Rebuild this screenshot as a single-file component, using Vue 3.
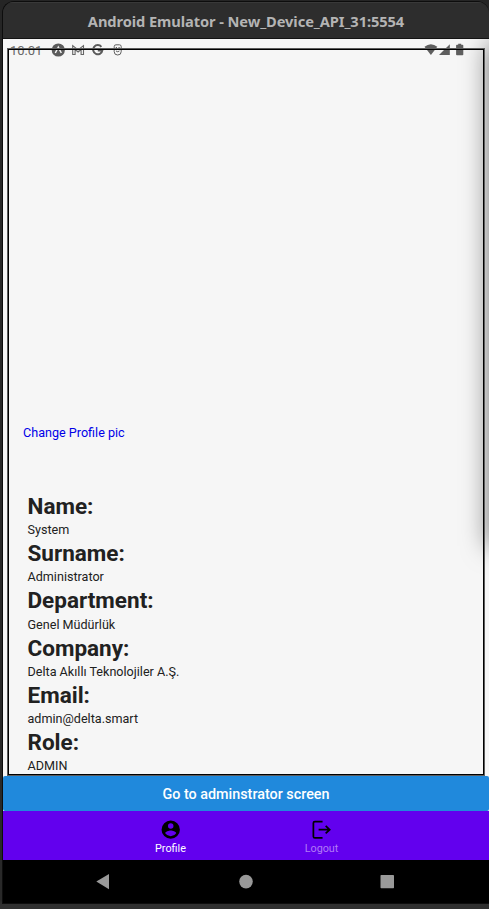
<script setup>
const fields = [
  { label: 'Name:', value: 'System' },
  { label: 'Surname:', value: 'Administrator' },
  { label: 'Department:', value: 'Genel Müdürlük' },
  { label: 'Company:', value: 'Delta Akıllı Teknolojiler A.Ş.' },
  { label: 'Email:', value: 'admin@delta.smart' },
  { label: 'Role:', value: 'ADMIN' },
]
</script>

<template>
  <div class="desktop">
    <div class="window">
      <header class="titlebar"><span class="title">Android Emulator - New_Device_API_31:5554</span></header>
      <main class="screen">
        <div class="drawer-shadow"></div>
        <div class="status">
          <span class="clock">10:01</span>
          <svg class="notifications" width="76" height="16" viewBox="0 0 76 16">
            <circle cx="7.3" cy="8" r="6.6" fill="#5c5c5c" />
            <path d="M4.3 11 7.3 5.2l3 5.8" fill="none" stroke="#f5f5f5" stroke-width="1.5" />
            <path d="M21.7 12.5V3.6l5.4 4.3 5.4-4.3v8.9h-2.4V7.6l-3 2.4-3-2.4v4.9z" fill="none" stroke="#666" stroke-width="1.1" />
            <path d="M50.4 4.9A4.6 4.6 0 1 0 51.3 8.5H46.8" fill="none" stroke="#5c5c5c" stroke-width="2" />
            <path d="M63.2 4.5q0-1.7 1.8-1.7h3.4q1.8 0 1.8 1.7v5.2q0 3.3-3.5 3.3t-3.5-3.3zM64.8 5.5h1.2m1.5 0h1.2M65 9q1.7 1.5 3.4 0" fill="none" stroke="#606060" stroke-width="1" />
          </svg>
          <svg class="signals" width="42" height="14" viewBox="0 0 42 14" fill="#5e5e5e">
            <path d="M.5 3.8Q6.9-1.2 13.3 3.8L6.9 12z" />
            <path d="M25.8 1.2V12H15z" />
            <path d="M32.9 1.8h1.3V.8h3v1h1.3q.8 0 .8.8v8.8q0 .8-.8.8h-5.6q-.8 0-.8-.8V2.6q0-.8.8-.8z" />
          </svg>
        </div>
        <section class="card">
          <a class="change">Change Profile pic</a>
          <dl class="fields">
            <template v-for="f in fields" :key="f.label">
              <dt>{{ f.label }}</dt>
              <dd>{{ f.value }}</dd>
            </template>
          </dl>
        </section>
      </main>
      <div class="action"><button class="admin">Go to adminstrator screen</button></div>
      <nav class="tabs">
        <div class="tab active">
          <svg width="22" height="22" viewBox="0 0 24 24">
            <path fill-rule="evenodd" d="M11.7 1.6a10 10 0 1 0 0 20 10 10 0 0 0 0-20zm0 3a3 3 0 1 1 0 6 3 3 0 0 1 0-6zm0 14.2a7.2 7.2 0 0 1-6-3.22c.03-1.99 4-3.08 6-3.08s5.97 1.09 6 3.08a7.2 7.2 0 0 1-6 3.22z" />
          </svg>
          <span>Profile</span>
        </div>
        <div class="tab">
          <svg width="22" height="22" viewBox="0 0 24 24">
            <path d="M12.6 2.8H4.2Q2.6 2.8 2.6 4.4V19q0 1.6 1.6 1.6h8.4M8.3 11.6h12M16 7.4l4.4 4.2-4.4 4.2" fill="none" stroke="#000" stroke-width="1.9" />
          </svg>
          <span>Logout</span>
        </div>
      </nav>
      <footer class="system">
        <svg width="300" height="16" viewBox="0 0 300 16" fill="#999">
          <path d="M.3 7.6 13 0v15.2z" />
          <circle cx="150" cy="7.6" r="6.8" />
          <rect x="284.5" y="1" width="13.5" height="13.2" rx=".7" />
        </svg>
      </footer>
    </div>
  </div>
</template>

<style>
body { background: #292929; overflow: hidden; }
</style>

<style scoped>
* { box-sizing: border-box; }
.desktop {
  height: 909px;
  padding: 1px 0 5px 2px;
  overflow: hidden;
  background: linear-gradient(#252525 0 80px, #292929 80px 900px, #303030 904px);
  font-family: Roboto, "Noto Sans", sans-serif;
}
.window {
  display: flex;
  flex-direction: column;
  height: 903px;
  border: 1px solid #0d0d0d;
  border-right: 0;
  border-radius: 12px 12px 0 0;
  overflow: hidden;
}
.titlebar {
  height: 37px;
  flex: none;
  background: #2d2d2d;
  border-top: 1px solid #393939;
  border-bottom: 1px solid #141414;
  text-align: center;
}
.title {
  display: block;
  font: 700 14.67px/36px "Noto Sans", sans-serif;
  letter-spacing: -0.09px;
  color: #b4b4b4;
  white-space: nowrap;
}
.screen {
  position: relative;
  height: 737px;
  flex: none;
  padding: 10px 5px 0 5px;
  background: #f6f6f6;
  overflow: hidden;
}
.drawer-shadow {
  position: absolute;
  left: 486px;
  top: 4px;
  width: 40px;
  height: 500px;
  box-shadow: 0 2px 26px 1px rgba(0, 0, 0, 0.5);
}
.status {
  position: absolute;
  left: 7px;
  right: 23px;
  top: 3px;
  height: 16px;
  display: flex;
  align-items: center;
}
.clock { width: 41px; font-size: 13px; line-height: 17px; padding-top: 1px; color: #686868; }
.notifications { flex: none; }
.signals { margin-left: auto; }
.card {
  position: relative;
  height: 726px;
  border: 1px solid #000;
  outline: 1px solid #5c5c5c;
  padding: 374px 0 0 14px;
  color: #212121;
}
.change { display: block; height: 17px; line-height: 17px; font-size: 12.6px; color: #0000e8; }
.fields { margin: 53px 0 0 4.5px; }
dt { height: 26.2px; line-height: 25.6px; font-size: 22.5px; font-weight: 700; }
dd { margin: 0; height: 21px; line-height: 19px; font-size: 12.6px; }
.action { height: 35px; flex: none; background: #f5f5f5; }
.admin {
  display: block;
  width: 100%;
  height: 35px;
  padding: 2px 0 0;
  border: 0;
  border-radius: 2px;
  background: #2089dc;
  color: #fff;
  font: 500 14.35px/33px Roboto, sans-serif;
}
.tabs {
  height: 49px;
  flex: none;
  display: flex;
  justify-content: center;
  background: #6200ee;
  padding: 8px 0 0;
}
.tab {
  width: 151px;
  display: flex;
  flex-direction: column;
  align-items: center;
  font-size: 10.8px;
  line-height: 15px;
  color: #b17af6;
}
.tab.active { color: #fff; }
.tab svg { display: block; }
.system {
  height: 43px;
  flex: none;
  display: flex;
  align-items: flex-start;
  justify-content: center;
  padding: 14px 0 0;
  background: #000;
}
</style>
